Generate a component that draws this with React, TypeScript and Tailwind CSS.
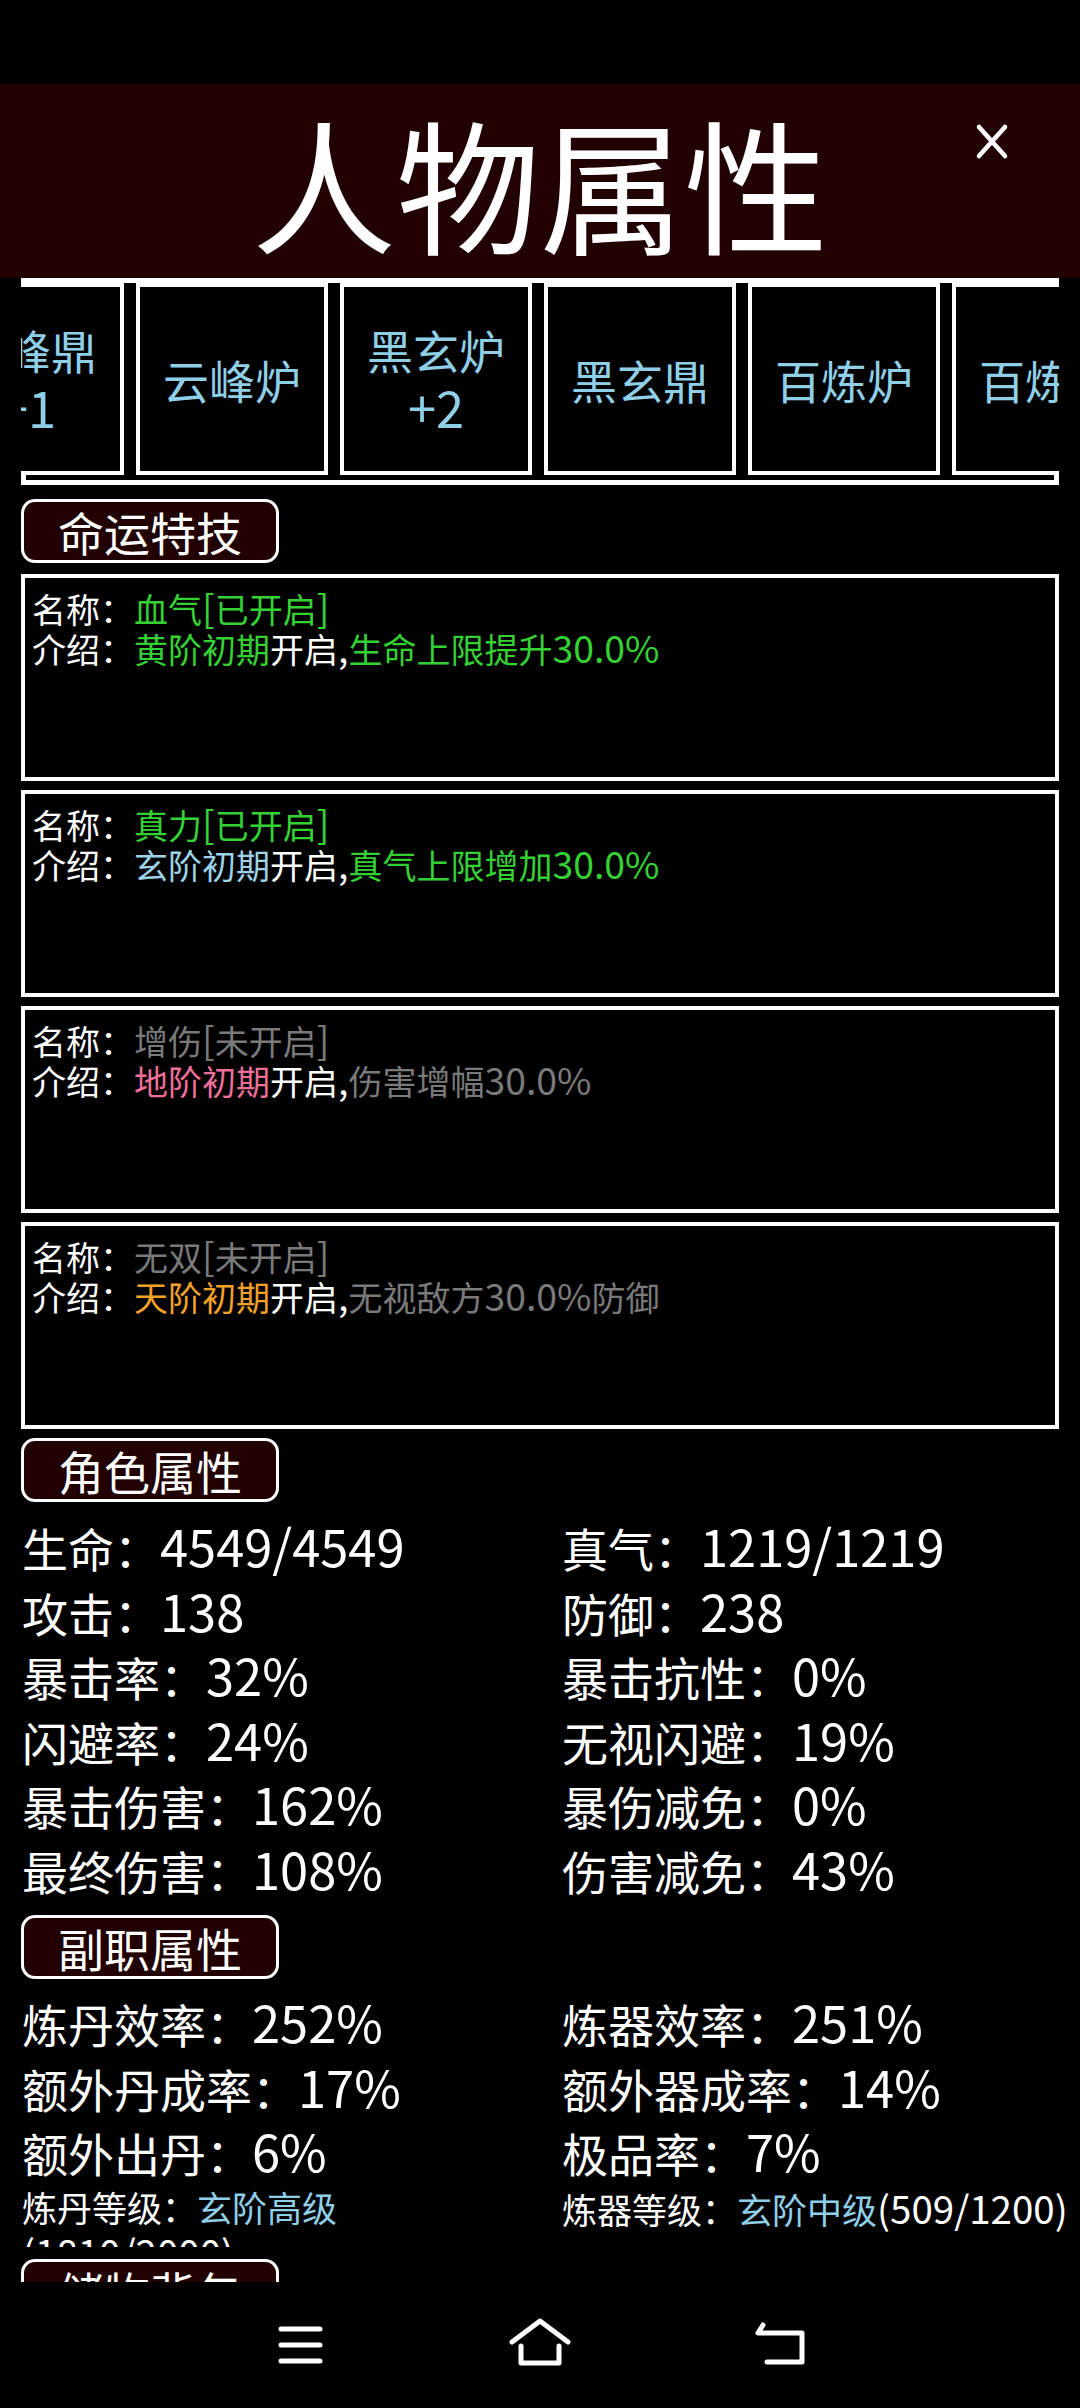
import React from 'react'

const furnaces = [
  ['云峰鼎', '+1'],
  ['云峰炉'],
  ['黑玄炉', '+2'],
  ['黑玄鼎'],
  ['百炼炉'],
  ['百炼鼎'],
]

type Part = { t: string; c: string }

const skills: { name: Part[]; desc: Part[] }[] = [
  {
    name: [{ t: '血气[已开启]', c: 'text-[#34d134]' }],
    desc: [
      { t: '黄阶初期', c: 'text-[#34d134]' },
      { t: '开启,', c: 'text-white' },
      { t: '生命上限提升30.0%', c: 'text-[#34d134]' },
    ],
  },
  {
    name: [{ t: '真力[已开启]', c: 'text-[#34d134]' }],
    desc: [
      { t: '玄阶初期', c: 'text-[#9dd3e8]' },
      { t: '开启,', c: 'text-white' },
      { t: '真气上限增加30.0%', c: 'text-[#34d134]' },
    ],
  },
  {
    name: [{ t: '增伤[未开启]', c: 'text-[#7a7a7a]' }],
    desc: [
      { t: '地阶初期', c: 'text-[#ee6f98]' },
      { t: '开启,', c: 'text-white' },
      { t: '伤害增幅30.0%', c: 'text-[#7a7a7a]' },
    ],
  },
  {
    name: [{ t: '无双[未开启]', c: 'text-[#7a7a7a]' }],
    desc: [
      { t: '天阶初期', c: 'text-[#f4a127]' },
      { t: '开启,', c: 'text-white' },
      { t: '无视敌方30.0%防御', c: 'text-[#7a7a7a]' },
    ],
  },
]

const roleStats = [
  ['生命', '4549/4549'],
  ['真气', '1219/1219'],
  ['攻击', '138'],
  ['防御', '238'],
  ['暴击率', '32%'],
  ['暴击抗性', '0%'],
  ['闪避率', '24%'],
  ['无视闪避', '19%'],
  ['暴击伤害', '162%'],
  ['暴伤减免', '0%'],
  ['最终伤害', '108%'],
  ['伤害减免', '43%'],
]

const jobStats = [
  ['炼丹效率', '252%'],
  ['炼器效率', '251%'],
  ['额外丹成率', '17%'],
  ['额外器成率', '14%'],
  ['额外出丹', '6%'],
  ['极品率', '7%'],
]

// latin runs come out a bit larger than the cjk glyphs in the game font
function Mixed({ text }: { text: string }) {
  const bits = text.split(/([0-9.%/()+\[\],-]+)/)
  return (
    <>
      {bits.map((b, i) =>
        i % 2 === 1 ? (
          <span key={i} className="text-[1.1em]">
            {b}
          </span>
        ) : (
          b
        )
      )}
    </>
  )
}

function Label({ text, className = '' }: { text: string; className?: string }) {
  return (
    <div
      className={`ml-[21px] w-[258px] h-[64px] shrink-0 border-[3px] border-white rounded-[14px] bg-[#210101] flex items-center justify-center text-white text-[46px] leading-none ${className}`}
    >
      {text}
    </div>
  )
}

export default function App() {
  return (
    <div className="w-[1080px] h-[2408px] bg-black overflow-hidden flex flex-col font-['Noto_Sans_CJK_SC','Noto_Sans',sans-serif]">
      {/* status bar */}
      <div className="h-[84px] shrink-0 bg-black" />

      {/* header */}
      <div className="h-[194px] shrink-0 bg-[#210101] relative flex items-center justify-center">
        <span className="text-white text-[144px] leading-none">人物属性</span>
        <button className="absolute left-[972px] top-[38px] w-[40px] h-[40px]">
          <svg viewBox="0 0 40 40" className="w-[40px] h-[40px]">
            <path d="M7 5 L33 34 M33 5 L7 34" stroke="white" strokeWidth="4.5" strokeLinecap="round" />
          </svg>
        </button>
      </div>

      {/* scroll area */}
      <div className="h-[2004px] shrink-0 overflow-hidden flex flex-col">
        {/* furnace strip */}
        <div className="mx-[21px] h-[207px] shrink-0 border-[5px] border-white">
          <div className="-mx-[5px] h-[192px] bg-black overflow-hidden">
            <div className="flex gap-[12px] -ml-[89px]">
              {furnaces.map((f, i) => (
                <div
                  key={i}
                  className="w-[192px] h-[192px] shrink-0 border-[4px] border-white bg-black flex flex-col items-center justify-center text-[#8fcfe8] text-[46px] leading-[57px] whitespace-nowrap"
                >
                  {f.map((l, j) => (
                    <span key={j}>
                      <Mixed text={l} />
                    </span>
                  ))}
                </div>
              ))}
            </div>
          </div>
        </div>

        <Label text="命运特技" className="mt-[14px]" />

        <div className="mt-[11px] flex flex-col gap-[9px]">
          {skills.map((s, i) => (
            <div
              key={i}
              className="mx-[21px] h-[207px] border-[4px] border-white bg-black pt-[9px] pl-[7px] text-[34px] leading-[40px] text-white whitespace-nowrap"
            >
              <div className="h-[40px]">
                名称：
                {s.name.map((p, j) => (
                  <span key={j} className={p.c}>
                    <Mixed text={p.t} />
                  </span>
                ))}
              </div>
              <div className="h-[40px]">
                介绍：
                {s.desc.map((p, j) => (
                  <span key={j} className={p.c}>
                    <Mixed text={p.t} />
                  </span>
                ))}
              </div>
            </div>
          ))}
        </div>

        <Label text="角色属性" className="mt-[9px]" />

        <div className="mt-[11px] mb-[3px] grid grid-cols-2 text-white text-[46px]">
          {roleStats.map(([k, v]) => (
            <div key={k} className="pl-[22px] h-[64.5px] leading-[64.5px] whitespace-nowrap">
              {k}：<Mixed text={v} />
            </div>
          ))}
        </div>

        <Label text="副职属性" className="mt-[12px]" />

        <div className="mt-[10px] pb-[3px] grid grid-cols-2 text-white text-[46px]">
          {jobStats.map(([k, v]) => (
            <div key={k} className="pl-[22px] h-[64.5px] leading-[64.5px] whitespace-nowrap">
              {k}：<Mixed text={v} />
            </div>
          ))}
          <div className="pl-[22px] h-[64px] overflow-hidden text-[35px] leading-[44px] pt-[2px]">
            炼丹等级：<span className="text-[#8fcfe8]">玄阶高级</span>
            <Mixed text="(1810/2000)" />
          </div>
          <div className="pl-[22px] h-[64px] text-[35px] leading-[44px] pt-[2px] whitespace-nowrap">
            炼器等级：<span className="text-[#8fcfe8]">玄阶中级</span>
            <Mixed text="(509/1200)" />
          </div>
        </div>

        <Label text="储物背包" className="mt-[9px]" />
      </div>

      {/* nav bar */}
      <div className="flex-1 bg-black flex items-start">
        <svg viewBox="0 0 1080 126" className="w-[1080px] h-[126px]">
          <g stroke="white" strokeWidth="5" strokeLinecap="round" fill="none" strokeLinejoin="round">
            <path d="M281 47 L320 47 M281 63 L320 63 M281 79 L320 79" />
            <path d="M512 60 L540 39 L568 60 M521 64 L521 81 L559 81 L559 64" />
            <path d="M763 43 L758 51 L802 51 L802 80 L767 80" />
          </g>
        </svg>
      </div>
    </div>
  )
}
